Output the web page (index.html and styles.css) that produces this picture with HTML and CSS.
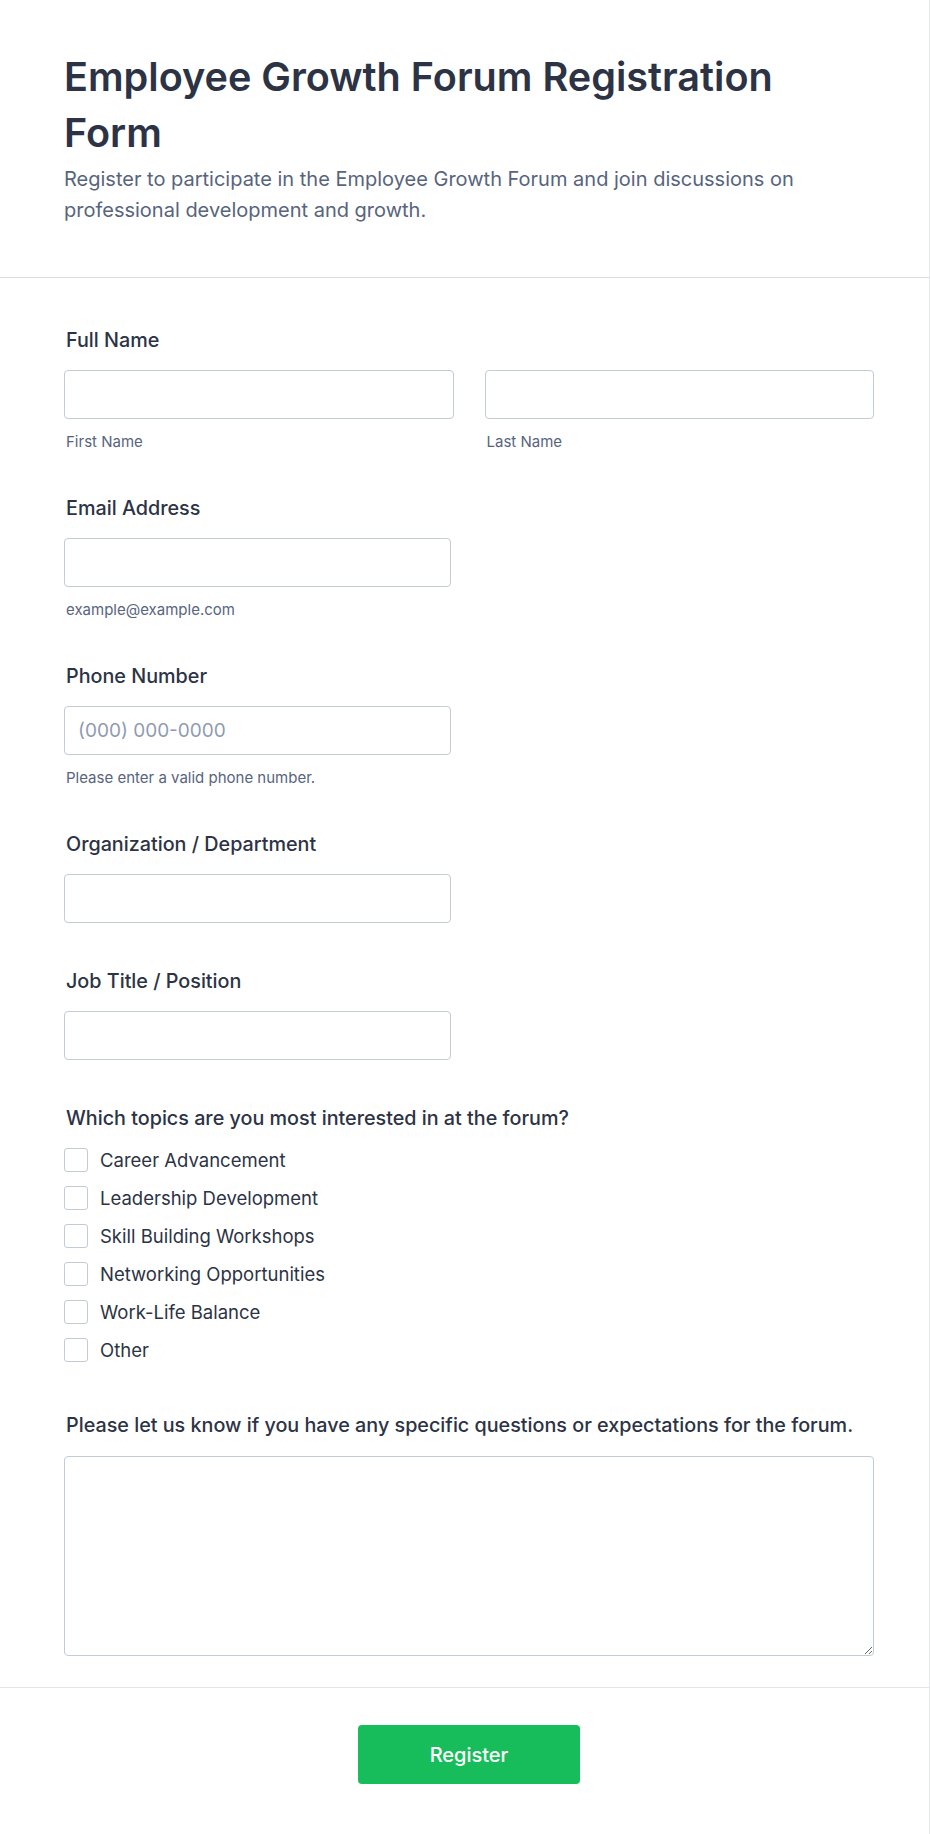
FILE: index.html
```html
<!DOCTYPE html>
<html lang="en">
<head>
<meta charset="utf-8">
<title>Employee Growth Forum Registration Form</title>
<link rel="stylesheet" href="styles.css">
</head>
<body>
<div class="form-card">
  <header class="form-header">
    <h1 class="form-title">Employee Growth Forum Registration Form</h1>
    <p class="form-subtitle">Register to participate in the Employee Growth Forum and join discussions on professional development and growth.</p>
  </header>

  <form class="form-body">
    <div class="field">
      <label class="field-label">Full Name</label>
      <div class="name-row">
        <div class="name-col">
          <input class="text-input" type="text">
          <span class="sub-label">First Name</span>
        </div>
        <div class="name-col">
          <input class="text-input" type="text">
          <span class="sub-label">Last Name</span>
        </div>
      </div>
    </div>

    <div class="field">
      <label class="field-label">Email Address</label>
      <input class="text-input half" type="email">
      <span class="sub-label">example@example.com</span>
    </div>

    <div class="field">
      <label class="field-label">Phone Number</label>
      <input class="text-input half" type="tel" placeholder="(000) 000-0000">
      <span class="sub-label">Please enter a valid phone number.</span>
    </div>

    <div class="field field-plain">
      <label class="field-label">Organization / Department</label>
      <input class="text-input half" type="text">
    </div>

    <div class="field field-plain">
      <label class="field-label">Job Title / Position</label>
      <input class="text-input half" type="text">
    </div>

    <div class="field field-checks">
      <label class="field-label">Which topics are you most interested in at the forum?</label>
      <div class="check-list">
        <label class="check-item"><span class="check-box"></span>Career Advancement</label>
        <label class="check-item"><span class="check-box"></span>Leadership Development</label>
        <label class="check-item"><span class="check-box"></span>Skill Building Workshops</label>
        <label class="check-item"><span class="check-box"></span>Networking Opportunities</label>
        <label class="check-item"><span class="check-box"></span>Work-Life Balance</label>
        <label class="check-item"><span class="check-box"></span>Other</label>
      </div>
    </div>

    <div class="field field-last">
      <label class="field-label">Please let us know if you have any specific questions or expectations for the forum.</label>
      <textarea class="text-area"></textarea>
    </div>
  </form>

  <footer class="form-footer">
    <button class="submit-btn" type="button">Register</button>
  </footer>
</div>
</body>
</html>
```

FILE: styles.css
```css
* { box-sizing: border-box; }

html, body {
  margin: 0;
  padding: 0;
  background: #ffffff;
}

body {
  font-family: Inter, "Noto Sans", "Liberation Sans", sans-serif;
  color: #2c3345;
}

.form-card {
  width: 930px;
  min-height: 1834px;
  border-right: 1px solid #e6e8ef;
}

.form-header {
  padding: 49px 55px 51px 64px;
  border-bottom: 1px solid #d8dbe6;
}

.form-title {
  margin: 0;
  font-size: 39.6px;
  line-height: 56px;
  font-weight: 600;
  color: #2c3345;
  letter-spacing: 0;
}

.form-subtitle {
  margin: 3px 0 0;
  font-size: 20px;
  line-height: 31px;
  color: #57647e;
  font-weight: 400;
}

.form-body {
  padding: 50px 55px 31px 64px;
  display: flex;
  flex-direction: column;
}

.field {
  display: flex;
  flex-direction: column;
  margin-bottom: 45px;
}

.field-plain { margin-bottom: 46px; }
.field-checks { margin-bottom: 51px; }
.field-last { margin-bottom: 0; }

.field-label {
  font-size: 19.75px;
  line-height: 24px;
  font-weight: 500;
  color: #2c3345;
  padding-left: 2px;
  margin-bottom: 18px;
}

.field-last .field-label { margin-bottom: 19px; }

.name-row {
  display: flex;
  gap: 31px;
}

.name-col {
  flex: 1;
  display: flex;
  flex-direction: column;
}

.text-input {
  height: 49px;
  width: 100%;
  border: 1px solid #c3cad8;
  border-radius: 4px;
  padding: 0 13px;
  font-family: inherit;
  font-size: 19px;
  color: #2c3345;
  background: #fff;
  outline: none;
}

.text-input.half { width: 387px; }

.text-input::placeholder { color: #8f9bb0; }

.sub-label {
  margin-top: 14px;
  font-size: 15px;
  line-height: 18px;
  color: #57647e;
  padding-left: 2px;
}

.check-list {
  display: flex;
  flex-direction: column;
  gap: 14px;
}

.check-item {
  display: flex;
  align-items: center;
  gap: 12px;
  font-size: 18.5px;
  line-height: 24px;
  color: #2c3345;
}

.check-box {
  width: 24px;
  height: 24px;
  border: 1px solid #c3cad8;
  border-radius: 3px;
  background: #fff;
  flex: none;
}

.text-area {
  height: 200px;
  width: 100%;
  border: 1px solid #c3cad8;
  border-radius: 4px;
  font-family: inherit;
  font-size: 16px;
  padding: 10px 13px;
  resize: vertical;
  outline: none;
}

.form-footer {
  border-top: 1px solid #e3e5ee;
  padding: 37px 55px 50px 64px;
  display: flex;
  justify-content: center;
}

.submit-btn {
  width: 222px;
  height: 59px;
  background: #18bd5b;
  color: #ffffff;
  border: none;
  border-radius: 4px;
  font-family: inherit;
  font-size: 20px;
  font-weight: 500;
}
```
